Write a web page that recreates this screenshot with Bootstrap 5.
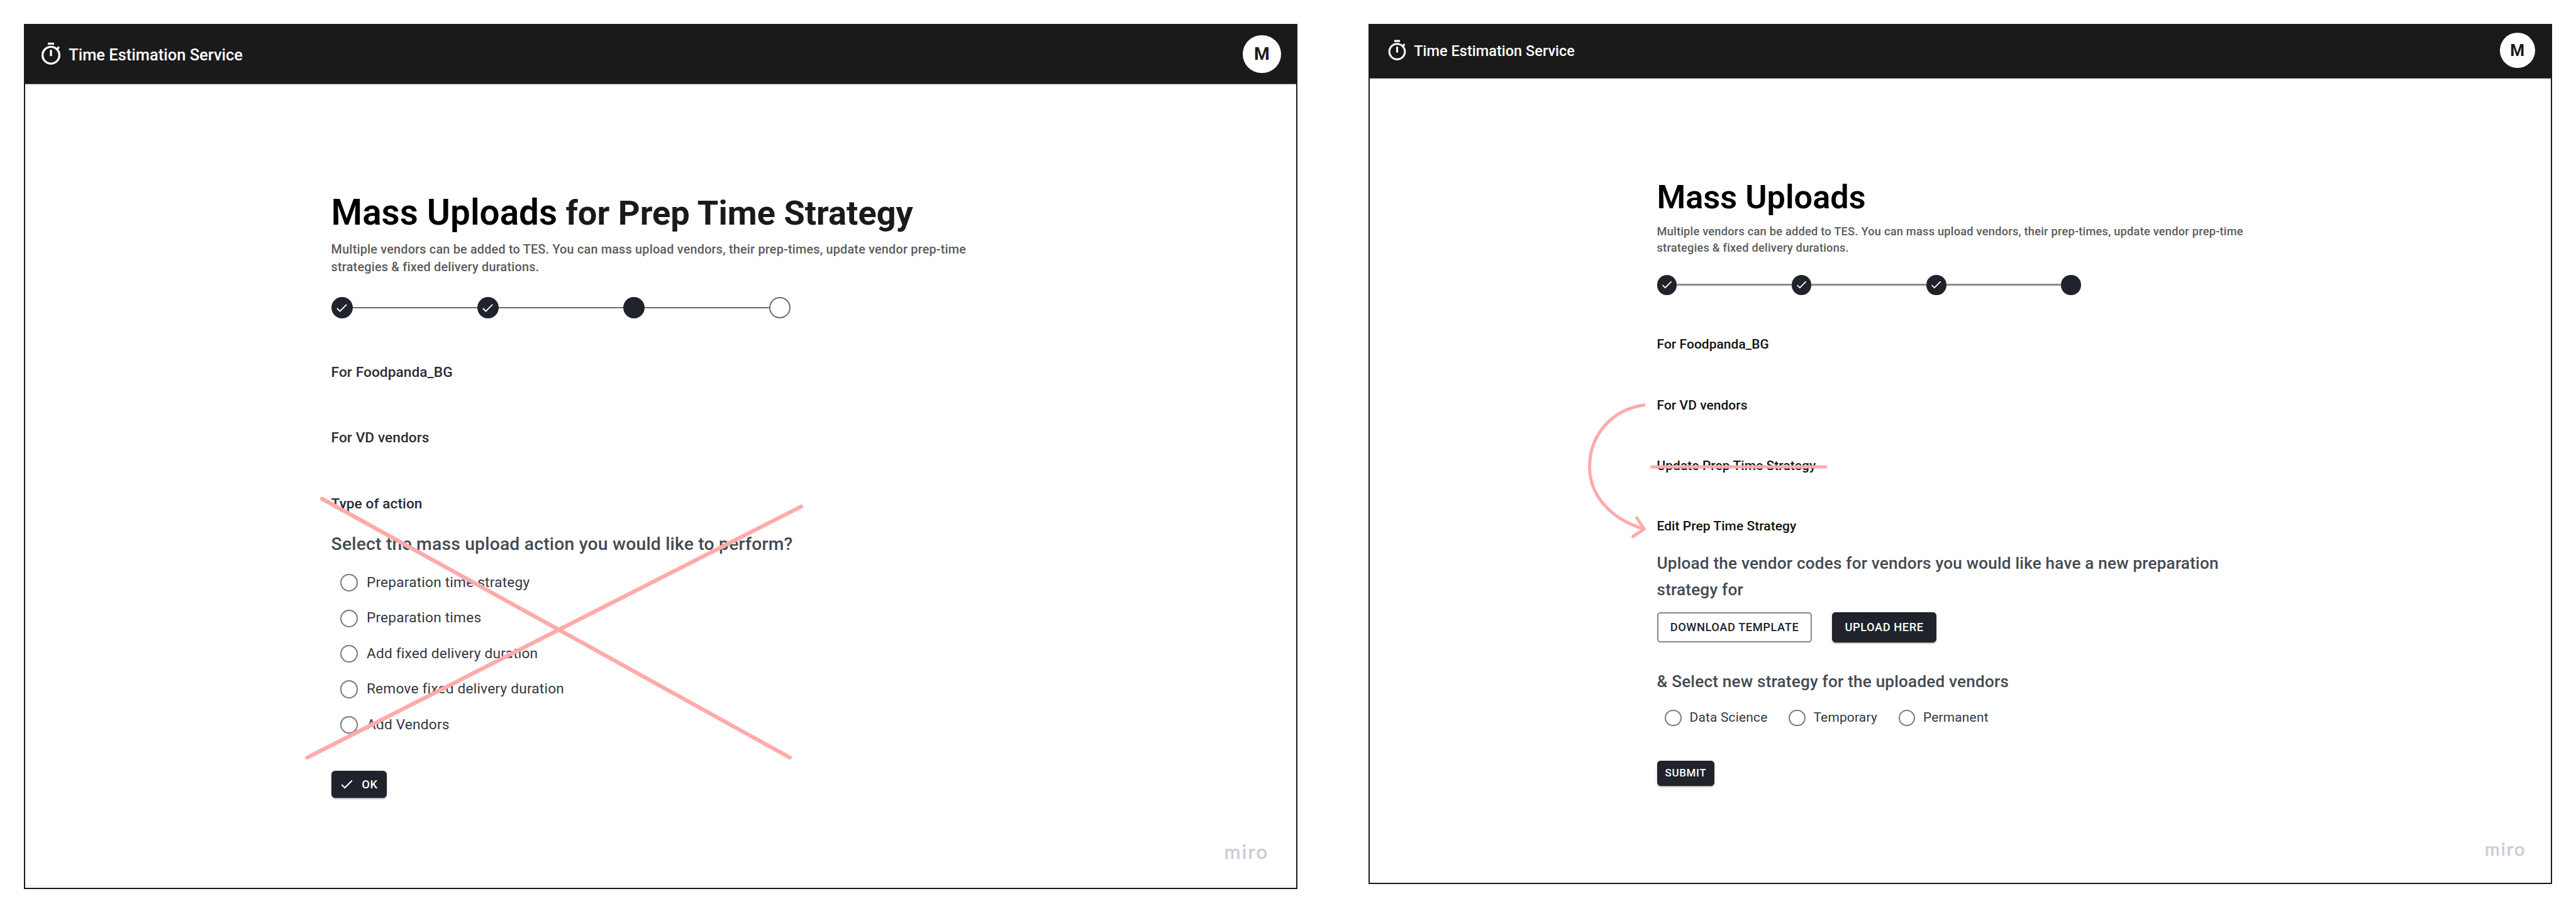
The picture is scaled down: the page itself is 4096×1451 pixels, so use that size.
<!DOCTYPE html>
<html lang="en">
<head>
<meta charset="utf-8">
<meta name="viewport" content="width=device-width, initial-scale=1">
<title>Time Estimation Service – Mass Uploads</title>
<link href="https://cdn.jsdelivr.net/npm/bootstrap@5.3.0/dist/css/bootstrap.min.css" rel="stylesheet">
<style>
  body { font-family: Roboto, "Liberation Sans", sans-serif; background: #fff; color: #2b2c35; overflow: hidden; }
  .board { width: 4096px; height: 1451px; padding: 38px 38px 0 38px; }
  /* --u is one design pixel of the screen inside the frame */
  .screen { --u: 1.416px; width: 2024.5px; height: 1375px; border: 2px solid #1a1a1a; background: #fff; }
  .screen-a { box-shadow: inset 0 -5px 0 #f4f4f5; }
  .screen-b { --u: 1.308px; width: 1882px; height: 1367px; margin-left: 113.5px; }
  .topbar { background: #1a1a1a; color: #fff; height: 93.6px; padding: 0 24px 0 20.8px; flex: none; border-bottom: 1px solid #666; }
  .screen-b .topbar { height: 84.5px; padding: 0 25.5px 3px 24.9px; }
  .topbar .timer { width: calc(28.3 * var(--u)); height: calc(28.3 * var(--u)); margin-right: 8.3px; }
  .topbar .brand { font-size: calc(18 * var(--u)); font-weight: 550; line-height: 1.2; padding-top: 1px; }
  .avatar { width: calc(42.6 * var(--u)); height: calc(42.6 * var(--u)); font-size: calc(20 * var(--u)); font-weight: 700; color: #1a1a1a; background: #fff; line-height: 1; }
  .content { padding: calc(121 * var(--u)) 0 0 486.6px; white-space: nowrap; }
  .screen-b .content { padding-left: 456.5px; }
  .page-title { font-size: calc(40 * var(--u)); line-height: calc(46.6 * var(--u)); font-weight: 570; color: #000; margin: 0; height: calc(46.6 * var(--u)); }
  .page-title .tail { font-size: 54.2px; font-weight: 700; color: #1a1a1a; line-height: 1; margin-left: 13.4px; }
  .intro { font-size: calc(14 * var(--u)); line-height: calc(19.95 * var(--u)); font-weight: 550; letter-spacing: calc(.15 * var(--u)); color: #5b5b5b; margin: calc(8.3 * var(--u)) 0 0; }
  .steps { height: calc(24 * var(--u)); margin-top: calc(23.3 * var(--u)); width: calc(515.6 * var(--u)); }
  .steps .dot { width: calc(24 * var(--u)); height: calc(24 * var(--u)); background: #20232b; color: #fff; flex: none; }
  .steps .dot svg { width: calc(16 * var(--u)); height: calc(16 * var(--u)); }
  .steps .dot-open { background: #fff; border: 2px solid #6b6e73; }
  .steps .bar { height: 2.4px; background: #6d6d6d; }
  .screen-b .steps .bar { background: #8c8c8c; height: 3px; }
  .section { font-size: calc(16 * var(--u)); line-height: calc(24 * var(--u)); font-weight: 550; letter-spacing: calc(.06 * var(--u)); margin: calc(49.7 * var(--u)) 0 0; }
  .screen-b .section { color: #111; }
  .steps + .section { margin-top: calc(48.6 * var(--u)); }
  .question { font-size: calc(20 * var(--u)); line-height: calc(28.25 * var(--u)); font-weight: 530; letter-spacing: calc(.14 * var(--u)); color: #444a52; margin: calc(19.4 * var(--u)) 0 0; }
  .screen-b .question { line-height: calc(32 * var(--u)); margin-top: calc(17 * var(--u)); }
  .screen-b .question-2 { margin-top: calc(31.9 * var(--u)); }
  .choices { margin: calc(9.2 * var(--u)) 0 0 calc(9.9 * var(--u)); }
  .screen-b .choices { margin-top: calc(7.6 * var(--u)); gap: calc(25.9 * var(--u)); }
  .choice { height: calc(39.83 * var(--u)); font-size: calc(16 * var(--u)); letter-spacing: calc(.15 * var(--u)); line-height: 1; color: #35373f; gap: calc(9.9 * var(--u)); }
  .choice .ring { width: calc(20 * var(--u)); height: calc(20 * var(--u)); border: calc(2 * var(--u)) solid #7b7b7b; }
  .btn-ui { --bs-btn-color: #fff; --bs-btn-bg: #20232b; --bs-btn-border-color: #20232b; --bs-btn-padding-x: 0; --bs-btn-padding-y: 0;
    --bs-btn-font-weight: 500; --bs-btn-font-size: calc(13 * var(--u)); --bs-btn-line-height: 1; --bs-btn-border-radius: calc(4 * var(--u));
    letter-spacing: calc(.46 * var(--u)); height: calc(30.4 * var(--u)); width: calc(70.1 * var(--u));
    box-shadow: 0 3px 1px -2px rgba(0,0,0,.2), 0 2px 2px rgba(0,0,0,.14), 0 1px 5px rgba(0,0,0,.12); }
  .btn-ok { width: calc(62.2 * var(--u)); margin-top: calc(31.9 * var(--u)); }
  .btn-ok svg { width: 24.6px; height: 24.6px; margin-right: 12px; margin-left: -2px; }
  .btn-wide { --bs-btn-font-size: calc(14 * var(--u)); letter-spacing: calc(.42 * var(--u)); height: calc(36.4 * var(--u)); width: calc(127.6 * var(--u)); }
  .btn-line { --bs-btn-bg: #fff; --bs-btn-color: #20232b; --bs-btn-border-color: #85878b; --bs-btn-border-width: 2px; width: calc(188.8 * var(--u)); box-shadow: none; }
  .upload-row { margin-top: calc(11.3 * var(--u)); gap: calc(23.8 * var(--u)); }
  .btn-send { margin-top: calc(32.2 * var(--u)); }
  .watermark { font: 400 31px/36px Lato, "Open Sans", sans-serif; letter-spacing: 2.4px; -webkit-text-stroke: .7px #cdcbd8; color: #cdcbd8; padding: 0 43px 39.6px 0; }
  .screen-b .watermark { font-size: 28.8px; letter-spacing: 2.2px; padding: 0 39.5px 35.6px 0; }
  .notes { left: 0; top: 0; width: 4096px; height: 1451px; pointer-events: none; }
</style>
<script src="https://cdn.jsdelivr.net/npm/bootstrap@5.3.0/dist/js/bootstrap.bundle.min.js"></script>
</head>
<body>
<svg class="d-none" aria-hidden="true">
  <symbol id="i-timer" viewBox="0 0 24 24"><path fill="currentColor" d="M15 1H9v2h6V1zm-4 13h2V8h-2v6zm8.03-6.61 1.42-1.42c-.43-.51-.9-.99-1.41-1.41l-1.42 1.42A8.96 8.96 0 0 0 12 4a9 9 0 1 0 9 9c0-2.12-.74-4.07-1.97-5.61zM12 20c-3.87 0-7-3.13-7-7s3.13-7 7-7 7 3.13 7 7-3.13 7-7 7z"/></symbol>
  <symbol id="i-check" viewBox="0 0 24 24"><path fill="currentColor" d="M9 16.17 4.83 12l-1.42 1.41L9 19 21 7l-1.41-1.41z"/></symbol>
</svg>

<main class="board position-relative d-flex align-items-start">

  <section class="screen screen-a d-flex flex-column">
    <header class="topbar d-flex align-items-center">
      <svg class="timer"><use href="#i-timer"/></svg>
      <span class="brand">Time Estimation Service</span>
      <span class="avatar rounded-circle ms-auto d-flex align-items-center justify-content-center">M</span>
    </header>
    <div class="content">
      <h1 class="page-title">Mass Uploads<span class="tail">for Prep Time Strategy</span></h1>
      <p class="intro">Multiple vendors can be added to TES. You can mass upload vendors, their prep-times, update vendor prep-time<br>strategies &amp; fixed delivery durations.</p>
      <div class="steps d-flex align-items-center">
        <span class="dot rounded-circle d-flex align-items-center justify-content-center"><svg><use href="#i-check"/></svg></span>
        <span class="bar flex-fill"></span>
        <span class="dot rounded-circle d-flex align-items-center justify-content-center"><svg><use href="#i-check"/></svg></span>
        <span class="bar flex-fill"></span>
        <span class="dot rounded-circle"></span>
        <span class="bar flex-fill"></span>
        <span class="dot dot-open rounded-circle"></span>
      </div>
      <p class="section">For Foodpanda_BG</p>
      <p class="section">For VD vendors</p>
      <p class="section">Type of action</p>
      <p class="question">Select the mass upload action you would like to perform?</p>
      <div class="choices d-flex flex-column">
        <label class="choice d-flex align-items-center"><span class="ring rounded-circle"></span>Preparation time strategy</label>
        <label class="choice d-flex align-items-center"><span class="ring rounded-circle"></span>Preparation times</label>
        <label class="choice d-flex align-items-center"><span class="ring rounded-circle"></span>Add fixed delivery duration</label>
        <label class="choice d-flex align-items-center"><span class="ring rounded-circle"></span>Remove fixed delivery duration</label>
        <label class="choice d-flex align-items-center"><span class="ring rounded-circle"></span>Add Vendors</label>
      </div>
      <button class="btn btn-ui btn-ok d-flex align-items-center justify-content-center"><svg><use href="#i-check"/></svg>OK</button>
    </div>
    <footer class="watermark mt-auto text-end">miro</footer>
  </section>

  <section class="screen screen-b d-flex flex-column">
    <header class="topbar d-flex align-items-center">
      <svg class="timer"><use href="#i-timer"/></svg>
      <span class="brand">Time Estimation Service</span>
      <span class="avatar rounded-circle ms-auto d-flex align-items-center justify-content-center">M</span>
    </header>
    <div class="content">
      <h1 class="page-title">Mass Uploads</h1>
      <p class="intro">Multiple vendors can be added to TES. You can mass upload vendors, their prep-times, update vendor prep-time<br>strategies &amp; fixed delivery durations.</p>
      <div class="steps d-flex align-items-center">
        <span class="dot rounded-circle d-flex align-items-center justify-content-center"><svg><use href="#i-check"/></svg></span>
        <span class="bar flex-fill"></span>
        <span class="dot rounded-circle d-flex align-items-center justify-content-center"><svg><use href="#i-check"/></svg></span>
        <span class="bar flex-fill"></span>
        <span class="dot rounded-circle d-flex align-items-center justify-content-center"><svg><use href="#i-check"/></svg></span>
        <span class="bar flex-fill"></span>
        <span class="dot rounded-circle"></span>
      </div>
      <p class="section">For Foodpanda_BG</p>
      <p class="section">For VD vendors</p>
      <p class="section">Update Prep Time Strategy</p>
      <p class="section">Edit Prep Time Strategy</p>
      <p class="question">Upload the vendor codes for vendors you would like have a new preparation<br>strategy for</p>
      <div class="upload-row d-flex">
        <button class="btn btn-ui btn-wide btn-line">DOWNLOAD TEMPLATE</button>
        <button class="btn btn-ui btn-wide">UPLOAD HERE</button>
      </div>
      <p class="question question-2">&amp; Select new strategy for the uploaded vendors</p>
      <div class="choices d-flex">
        <label class="choice d-flex align-items-center"><span class="ring rounded-circle"></span>Data Science</label>
        <label class="choice d-flex align-items-center"><span class="ring rounded-circle"></span>Temporary</label>
        <label class="choice d-flex align-items-center"><span class="ring rounded-circle"></span>Permanent</label>
      </div>
      <button class="btn btn-ui btn-send d-block">SUBMIT</button>
    </div>
    <footer class="watermark mt-auto text-end">miro</footer>
  </section>

  <!-- review marks drawn over both screens -->
  <svg class="notes position-absolute" viewBox="0 0 4096 1451" fill="none" stroke="#ffabab" stroke-linecap="round" stroke-linejoin="round">
    <path stroke-width="6.4" d="M512 792.6 1256 1204M488.5 1204 1274 805"/>
    <path stroke-width="5.2" d="M2626.5 742H2903"/>
    <path stroke-width="5" d="M2614 643.8C2563 651 2527.5 691 2527.5 742C2527.5 786 2560 825 2614 840.8M2602.5 822.8 2614.5 840.8 2596.5 852.6"/>
  </svg>
</main>
</body>
</html>
